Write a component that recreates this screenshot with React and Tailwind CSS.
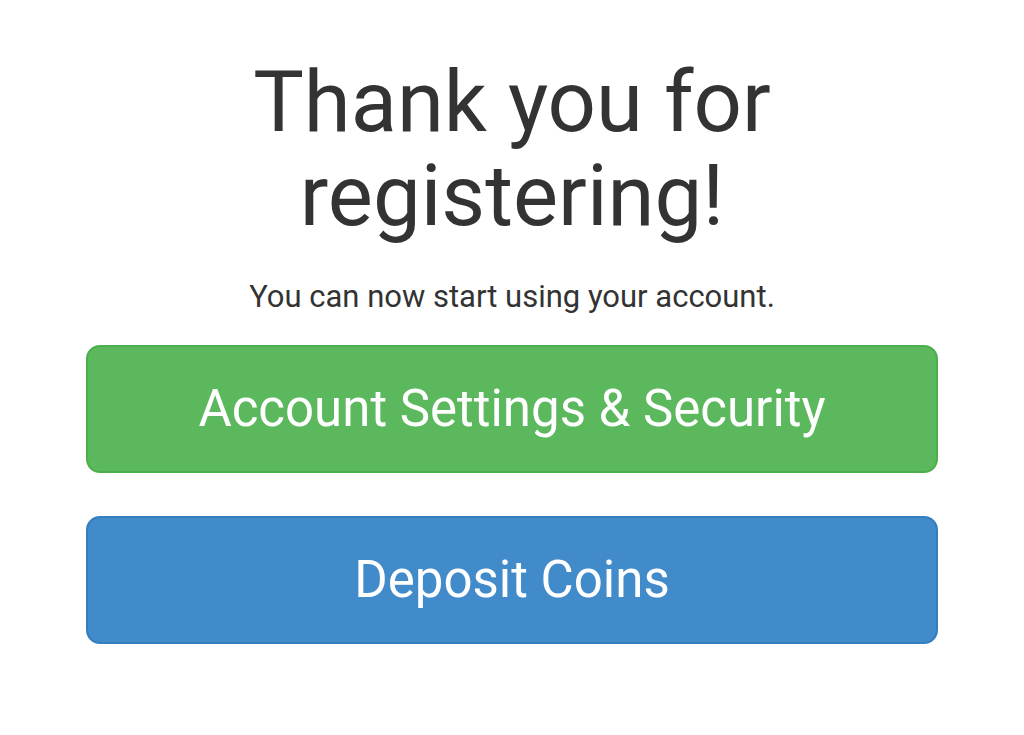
export default function App() {
  return (
    <div className="min-h-[735px] w-full bg-white px-[86px] pt-[55px] text-center text-[#333333]" style={{ fontFamily: "Roboto, 'Noto Sans', sans-serif" }}>
      <h1 className="text-[85px] font-normal leading-[94px]">Thank you for registering!</h1>
      <p className="mt-[34px] text-[31px] leading-[40px]">You can now start using your account.</p>
      <div className="mt-[28px] flex flex-col gap-[43px]">
        <button className="h-[128px] w-full rounded-[14px] border-2 border-[#4cae4c] bg-[#5cb85c] text-[51px] text-white">Account Settings &amp; Security</button>
        <button className="h-[128px] w-full rounded-[14px] border-2 border-[#357ebd] bg-[#428bca] text-[51px] text-white">Deposit Coins</button>
      </div>
    </div>
  );
}
